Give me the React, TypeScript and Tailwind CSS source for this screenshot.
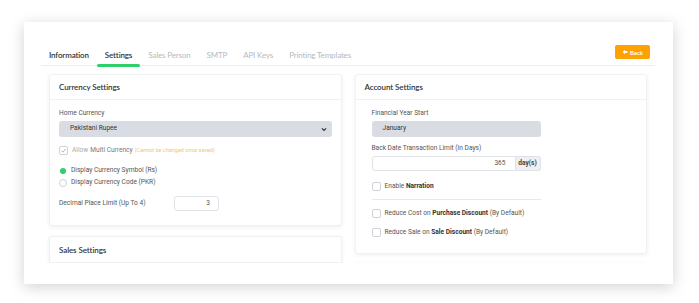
import React from "react";

const head = { fontFamily: "Lato, 'Open Sans', sans-serif" };
const body = { fontFamily: "Roboto, 'Liberation Sans', sans-serif" };

function Check({ checked = false }: { checked?: boolean }) {
  return (
    <span className="flex h-[9px] w-[9px] shrink-0 items-center justify-center rounded-[2px] border border-[#cfd2d6] bg-white">
      {checked && (
        <svg width="7" height="7" viewBox="0 0 10 10">
          <path d="M2 5.2 L4.2 7.4 L8.2 2.8" fill="none" stroke="#a3a7ac" strokeWidth="1.2" />
        </svg>
      )}
    </span>
  );
}

function Radio({ on = false }: { on?: boolean }) {
  return on ? (
    <span className="flex h-[8px] w-[8px] shrink-0 items-center justify-center">
      <span className="h-[6px] w-[6px] rounded-full bg-[#2fd06a]" />
    </span>
  ) : (
    <span className="h-[8px] w-[8px] shrink-0 rounded-full border border-[#cfd2d6] bg-white" />
  );
}

export default function App() {
  return (
    <div className="h-[303px] w-[699px] overflow-hidden bg-white pl-[24px] pt-[22px]" style={body}>
      <div className="h-[262px] w-[649px] bg-white pl-[17px] pr-[18px] shadow-[0_3px_14px_rgba(0,0,0,0.18)]">
        {/* tabs */}
        <div className="flex h-[44px] items-end justify-between border-b border-[#eceef1]" style={head}>
          <div className="flex h-full items-end pl-[8px] text-[8px] tracking-[-0.15px]">
            <div className="flex h-full items-center pr-[8px] pt-[22px] font-semibold text-[#333]">Information</div>
            <div className="relative flex h-full items-center px-[8px] pt-[22px] font-semibold text-[#333]">
              Settings
              <span className="absolute bottom-[-2px] left-0 h-[3px] w-full rounded-full bg-[#2fd06a]" />
            </div>
            <div className="flex h-full items-center px-[8px] pt-[22px] text-[#b7b9bd]">Sales Person</div>
            <div className="flex h-full items-center px-[8px] pt-[22px] text-[#b7b9bd]">SMTP</div>
            <div className="flex h-full items-center px-[8px] pt-[22px] text-[#b7b9bd]">API Keys</div>
            <div className="flex h-full items-center px-[8px] pt-[22px] text-[#b7b9bd]">Printing Templates</div>
          </div>
          <div className="mb-[6px] mr-[5px] flex h-[14px] w-[35px] items-center justify-center gap-[2px] rounded-[2px] bg-[#ffa100] text-[6px] font-bold text-white">
            <svg width="6" height="6" viewBox="0 0 10 10">
              <path d="M1 5 L5 1.2 L5 3.5 L9 3.5 L9 6.5 L5 6.5 L5 8.8 Z" fill="white" />
            </svg>
            Back
          </div>
        </div>

        {/* content */}
        <div className="mt-[8px] flex h-[189px] gap-[13px] overflow-hidden px-[8px]">
          {/* left column */}
          <div className="flex w-[293px] flex-col gap-[10px]">
            <div className="rounded-[3px] border border-[#f0f1f3] bg-white shadow-[0_1px_4px_rgba(0,0,0,0.07)]">
              <div className="flex h-[25px] items-center border-b border-[#f0f1f3] px-[9px] text-[8px] font-semibold tracking-[-0.1px] text-[#333]" style={head}>
                Currency Settings
              </div>
              <div className="px-[9px] pb-[14px] pt-[8px] text-[6.6px] text-[#555]">
                <div className="h-[10px] leading-[10px]">Home Currency</div>
                <div className="mt-[3px] flex h-[16px] items-center justify-between rounded-[3px] bg-[#d9dde3] pl-[11px] pr-[5px] text-[#333]">
                  <span>Pakistani Rupee</span>
                  <svg width="6" height="5" viewBox="0 0 10 8">
                    <path d="M1.5 2 L5 5.5 L8.5 2" fill="none" stroke="#333" strokeWidth="2" />
                  </svg>
                </div>
                <div className="mt-[8px] flex h-[11px] items-center gap-[4px]">
                  <Check checked />
                  <span className="text-[#a8abaf]">Allow</span>
                  <span className="-ml-[2px] text-[#777]">Multi Currency</span>
                  <span className="-ml-[2px] text-[5.5px] text-[#f7c56a]">(Cannot be changed once saved)</span>
                </div>
                <div className="mt-[9px] flex h-[11px] items-center gap-[4px]">
                  <Radio on />
                  <span>Display Currency Symbol (Rs)</span>
                </div>
                <div className="mt-[1px] flex h-[11px] items-center gap-[4px]">
                  <Radio />
                  <span>Display Currency Code (PKR)</span>
                </div>
                <div className="mt-[8px] flex h-[15px] items-center">
                  <span className="w-[115px]">Decimal Place Limit (Up To 4)</span>
                  <div className="flex h-[15px] w-[45px] items-center justify-end rounded-[3px] border border-[#dfe2e6] pr-[8px] text-[#555]">
                    3
                  </div>
                </div>
              </div>
            </div>
            <div className="rounded-[3px] border border-[#f0f1f3] bg-white shadow-[0_1px_4px_rgba(0,0,0,0.07)]">
              <div className="flex h-[26px] items-center border-b border-[#f0f1f3] px-[9px] text-[8px] font-semibold tracking-[-0.1px] text-[#333]" style={head}>
                Sales Settings
              </div>
              <div className="h-[40px]" />
            </div>
          </div>

          {/* right column */}
          <div className="flex w-[293px] flex-col gap-[9px]">
            <div className="rounded-[3px] border border-[#f0f1f3] bg-white shadow-[0_1px_4px_rgba(0,0,0,0.07)]">
              <div className="flex h-[25px] items-center border-b border-[#f0f1f3] px-[9px] text-[8px] font-semibold tracking-[-0.1px] text-[#333]" style={head}>
                Account Settings
              </div>
              <div className="px-[16px] pb-[15px] pt-[8px] text-[6.6px] text-[#555]">
                <div className="h-[10px] leading-[10px]">Financial Year Start</div>
                <div className="mt-[3px] flex h-[16px] w-[169px] items-center rounded-[3px] bg-[#d9dde3] pl-[11px] text-[#333]">
                  January
                </div>
                <div className="mt-[6px] h-[10px] leading-[10px]">Back Date Transaction Limit (In Days)</div>
                <div className="mt-[3px] flex h-[15px] w-[169px]">
                  <div className="flex flex-1 items-center justify-end rounded-l-[3px] border border-[#dfe2e6] pr-[9px]">365</div>
                  <div className="flex w-[25px] items-center justify-center rounded-r-[3px] border border-l-0 border-[#dfe2e6] bg-[#eef0f3] font-bold text-[#444]">
                    day(s)
                  </div>
                </div>
                <div className="mt-[10px] flex h-[11px] items-center gap-[4px]">
                  <Check />
                  <span>
                    Enable <b className="text-[#333]">Narration</b>
                  </span>
                </div>
                <div className="mt-[7px] w-[169px] border-t border-[#e6e8eb]" />
                <div className="mt-[8px] flex h-[11px] items-center gap-[4px]">
                  <Check />
                  <span>
                    Reduce Cost on <b className="text-[#333]">Purchase Discount</b> (By Default)
                  </span>
                </div>
                <div className="mt-[8px] flex h-[11px] items-center gap-[4px]">
                  <Check />
                  <span>
                    Reduce Sale on <b className="text-[#333]">Sale Discount</b> (By Default)
                  </span>
                </div>
              </div>
            </div>
            <div className="h-[40px] rounded-[3px] border border-[#f0f1f3] bg-white shadow-[0_1px_4px_rgba(0,0,0,0.07)]" />
          </div>
        </div>
      </div>
    </div>
  );
}
